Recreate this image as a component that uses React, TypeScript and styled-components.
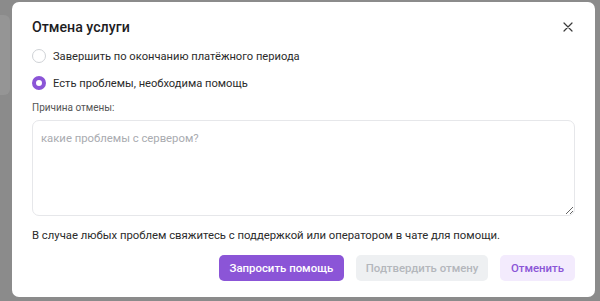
import React from 'react';
import styled, { createGlobalStyle } from 'styled-components';

const Global = createGlobalStyle`
	html, body{
		margin: 0;
		padding: 0;
		background: #8b8b8b;
		font-family: Roboto, "Noto Sans", sans-serif;
	}
`

const Backdrop = styled.div`
	position: relative;
	width: 600px;
	height: 301px;
	overflow: hidden;
	background: #8b8b8b;
	padding: 2px 5px 4px 12px;
	box-sizing: border-box;
`

const Ghost = styled.div`
	position: absolute;
	left: -10px;
	top: 15px;
	width: 20px;
	height: 80px;
	border-radius: 6px;
	background: #959595;
`

const Modal = styled.div`
	position: relative;
	height: 100%;
	background: #fff;
	border-radius: 7px;
	padding: 14px 20px 16px 20px;
	box-sizing: border-box;
	display: flex;
	flex-direction: column;
`

const Header = styled.div`
	display: flex;
	align-items: center;
	justify-content: space-between;
	height: 22px;
	margin-bottom: 10px;
`

const Title = styled.h2`
	margin: 0;
	font-size: 14.2px;
	font-weight: 500;
	color: #1d1d1f;
`

const Close = styled.button`
	border: none;
	background: none;
	padding: 0;
	width: 14px;
	height: 14px;
	display: flex;
	align-items: center;
	justify-content: center;
	color: #3a3a3a;
`

const Options = styled.div`
	display: flex;
	flex-direction: column;
	gap: 9px;
`

const Option = styled.label`
	display: flex;
	align-items: center;
	gap: 7px;
	height: 18px;
	font-size: 11.15px;
	color: #2b2b2b;
`

const Dot = styled.span<{ $on?: boolean }>`
	width: 14px;
	height: 14px;
	border-radius: 50%;
	box-sizing: border-box;
	border: ${p => p.$on ? '4px solid #8b55d7' : '1.5px solid #cfd2d6'};
	background: #fff;
`

const Label = styled.div`
	margin-top: 10px;
	font-size: 10px;
	color: #555;
	height: 14px;
`

const Area = styled.textarea`
	margin-top: 4px;
	height: 98px;
	border: 1px solid #e6e7ea;
	border-radius: 7px;
	padding: 11px 8px;
	box-sizing: border-box;
	font-family: inherit;
	font-size: 11.3px;
	color: #333;
	resize: vertical;
	outline: none;
	&::placeholder{
		color: #a9abb0;
	}
`

const Note = styled.p`
	margin: 12px 0 0;
	font-size: 11.3px;
	line-height: 15px;
	color: #2b2b2b;
`

const Actions = styled.div`
	display: flex;
	justify-content: flex-end;
	gap: 12px;
	margin-top: 12px;
`

const Button = styled.button<{ $kind: 'primary' | 'disabled' | 'soft' }>`
	height: 26px;
	border: none;
	border-radius: 5px;
	padding: 0 ${p => p.$kind === 'disabled' ? '9.5px' : '11px'};
	font-family: inherit;
	font-size: 11.4px;
	font-weight: 500;
	background: ${p => p.$kind === 'primary' ? '#8b55d7' : p.$kind === 'disabled' ? '#eef0f2' : '#f3ebfd'};
	color: ${p => p.$kind === 'primary' ? '#fff' : p.$kind === 'disabled' ? '#b4b7bc' : '#8b55d7'};
`

const App: React.FC = () => {
	return (
		<>
			<Global />
			<Backdrop>
				<Ghost />
				<Modal>
					<Header>
						<Title>Отмена услуги</Title>
						<Close aria-label="Закрыть">
							<svg width="10" height="10" viewBox="0 0 10 10">
								<path d="M1 1L9 9M9 1L1 9" stroke="currentColor" strokeWidth="1.2" strokeLinecap="round" />
							</svg>
						</Close>
					</Header>
					<Options>
						<Option><Dot />Завершить по окончанию платёжного периода</Option>
						<Option><Dot $on />Есть проблемы, необходима помощь</Option>
					</Options>
					<Label>Причина отмены:</Label>
					<Area placeholder="какие проблемы с сервером?" />
					<Note>В случае любых проблем свяжитесь с поддержкой или оператором в чате для помощи.</Note>
					<Actions>
						<Button $kind="primary">Запросить помощь</Button>
						<Button $kind="disabled">Подтвердить отмену</Button>
						<Button $kind="soft">Отменить</Button>
					</Actions>
				</Modal>
			</Backdrop>
		</>
	)
}

export default App;
